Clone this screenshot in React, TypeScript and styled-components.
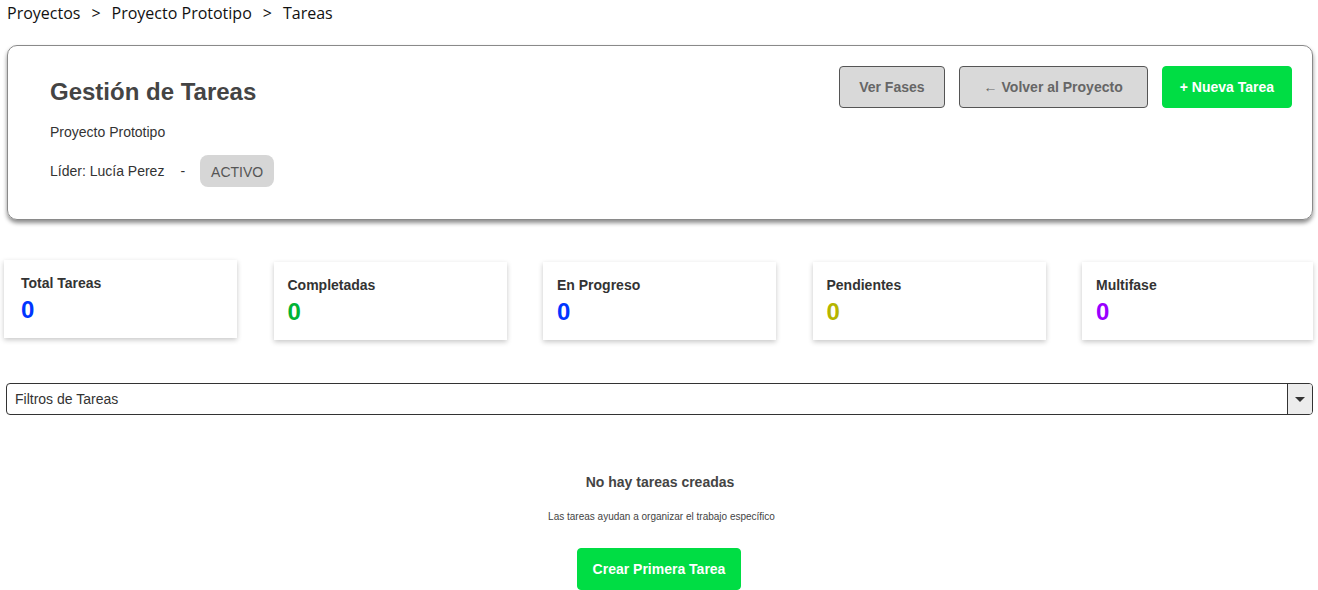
import React from "react";
import styled, { createGlobalStyle } from "styled-components";

const Global = createGlobalStyle`
  html, body { margin: 0; padding: 0; background: #fff; }
  body { font-family: "Liberation Sans", Arial, sans-serif; }
  * { box-sizing: border-box; }
`;

const Page = styled.div`
  padding: 0 5px 0 4px;
`;

const Breadcrumb = styled.nav`
  font-family: "Open Sans", "Noto Sans", sans-serif;
  font-size: 16px;
  color: #111;
  height: 26px;
  display: flex;
  align-items: center;
  padding-left: 3px;
  gap: 11px;
`;

const Sep = styled.span`
  color: #111;
`;

const HeaderCard = styled.section`
  margin: 19px 0 0 3px;
  height: 175px;
  border: 1px solid #8a8a8a;
  border-radius: 10px;
  box-shadow: 0 3px 4px rgba(0, 0, 0, 0.45);
  padding: 20px 20px 0 42px;
  display: flex;
  justify-content: space-between;
  align-items: flex-start;
`;

const Info = styled.div`
  padding-top: 12px;
  display: flex;
  flex-direction: column;
`;

const Title = styled.h1`
  margin: 0;
  font-size: 24px;
  line-height: 28px;
  font-weight: 700;
  color: #444;
`;

const Subtitle = styled.div`
  margin-top: 18px;
  font-size: 14px;
  line-height: 16px;
  color: #333;
`;

const MetaRow = styled.div`
  margin-top: 15px;
  display: flex;
  align-items: center;
  font-size: 14px;
  color: #333;
`;

const Dash = styled.span`
  margin: 0 15px 0 16px;
`;

const Badge = styled.span`
  display: inline-flex;
  align-items: center;
  height: 32px;
  padding: 0 11px;
  background: #d6d6d6;
  border-radius: 8px;
  color: #555;
  font-size: 14px;
  padding-top: 2px;
`;

const Actions = styled.div`
  display: flex;
  gap: 14px;
`;

const Button = styled.button<{ $primary?: boolean; $pad?: number }>`
  height: 42px;
  padding: 0 ${(p) => p.$pad ?? 19}px;
  border-radius: 4px;
  font-family: "Liberation Sans", Arial, sans-serif;
  font-size: 14px;
  font-weight: 700;
  cursor: pointer;
  border: 1px solid ${(p) => (p.$primary ? "#00dd44" : "#555")};
  background: ${(p) => (p.$primary ? "#00dd44" : "#d9d9d9")};
  color: ${(p) => (p.$primary ? "#fff" : "#666")};
`;

const Arrow = styled.span`
  font-weight: 400;
  margin-right: 4px;
`;

const Stats = styled.div`
  margin-top: 42px;
  display: grid;
  grid-template-columns: repeat(4, 233px) 1fr;
  gap: 36.5px;
`;

const StatCard = styled.div<{ $raised?: boolean }>`
  height: 78px;
  background: #fff;
  box-shadow: 0 2px 5px rgba(0, 0, 0, 0.22);
  padding: 15px ${(p) => (p.$raised ? 17 : 14)}px;
  transform: translateY(${(p) => (p.$raised ? "-2px" : "0")});
`;

const StatLabel = styled.div`
  font-size: 14px;
  line-height: 16px;
  font-weight: 700;
  color: #333;
`;

const StatValue = styled.div<{ $color: string }>`
  margin-top: 5px;
  font-size: 24px;
  line-height: 28px;
  font-weight: 700;
  color: ${(p) => p.$color};
`;

const Filter = styled.div`
  margin: 43px 0 0 2px;
  height: 32px;
  border: 1px solid #333;
  border-radius: 4px;
  display: flex;
  align-items: stretch;
  overflow: hidden;
`;

const FilterLabel = styled.div`
  flex: 1;
  display: flex;
  align-items: center;
  padding-left: 8px;
  font-size: 14px;
  color: #333;
`;

const FilterToggle = styled.div`
  width: 25px;
  border-left: 1px solid #333;
  background: #ececec;
  display: flex;
  align-items: center;
  justify-content: center;
`;

const Caret = styled.span`
  width: 0;
  height: 0;
  border-left: 5px solid transparent;
  border-right: 5px solid transparent;
  border-top: 5px solid #333;
`;

const Empty = styled.div`
  margin-top: 59px;
  display: flex;
  flex-direction: column;
  align-items: center;
`;

const EmptyTitle = styled.div`
  font-size: 14px;
  line-height: 16px;
  font-weight: 700;
  color: #444;
  padding-left: 3px;
`;

const EmptyText = styled.div`
  margin-top: 21px;
  font-size: 10px;
  line-height: 12px;
  color: #444;
  padding-left: 6px;
`;

const CreateButton = styled(Button)`
  margin-top: 25px;
  margin-left: 1px;
`;

const stats = [
  { label: "Total Tareas", color: "#0036ff", raised: true },
  { label: "Completadas", color: "#00b336" },
  { label: "En Progreso", color: "#0036ff" },
  { label: "Pendientes", color: "#b5b500" },
  { label: "Multifase", color: "#9900ff" },
];

export default function App() {
  return (
    <Page>
      <Global />
      <Breadcrumb>
        <span>Proyectos</span>
        <Sep>&gt;</Sep>
        <span>Proyecto Prototipo</span>
        <Sep>&gt;</Sep>
        <span>Tareas</span>
      </Breadcrumb>

      <HeaderCard>
        <Info>
          <Title>Gestión de Tareas</Title>
          <Subtitle>Proyecto Prototipo</Subtitle>
          <MetaRow>
            <span>Líder: Lucía Perez</span>
            <Dash>-</Dash>
            <Badge>ACTIVO</Badge>
          </MetaRow>
        </Info>
        <Actions>
          <Button $pad={19}>Ver Fases</Button>
          <Button $pad={24}>
            <Arrow>←</Arrow>Volver al Proyecto
          </Button>
          <Button $primary $pad={17}>
            + Nueva Tarea
          </Button>
        </Actions>
      </HeaderCard>

      <Stats>
        {stats.map((s) => (
          <StatCard key={s.label} $raised={s.raised}>
            <StatLabel>{s.label}</StatLabel>
            <StatValue $color={s.color}>0</StatValue>
          </StatCard>
        ))}
      </Stats>

      <Filter>
        <FilterLabel>Filtros de Tareas</FilterLabel>
        <FilterToggle>
          <Caret />
        </FilterToggle>
      </Filter>

      <Empty>
        <EmptyTitle>No hay tareas creadas</EmptyTitle>
        <EmptyText>Las tareas ayudan a organizar el trabajo específico</EmptyText>
        <CreateButton $primary $pad={15}>
          Crear Primera Tarea
        </CreateButton>
      </Empty>
    </Page>
  );
}
